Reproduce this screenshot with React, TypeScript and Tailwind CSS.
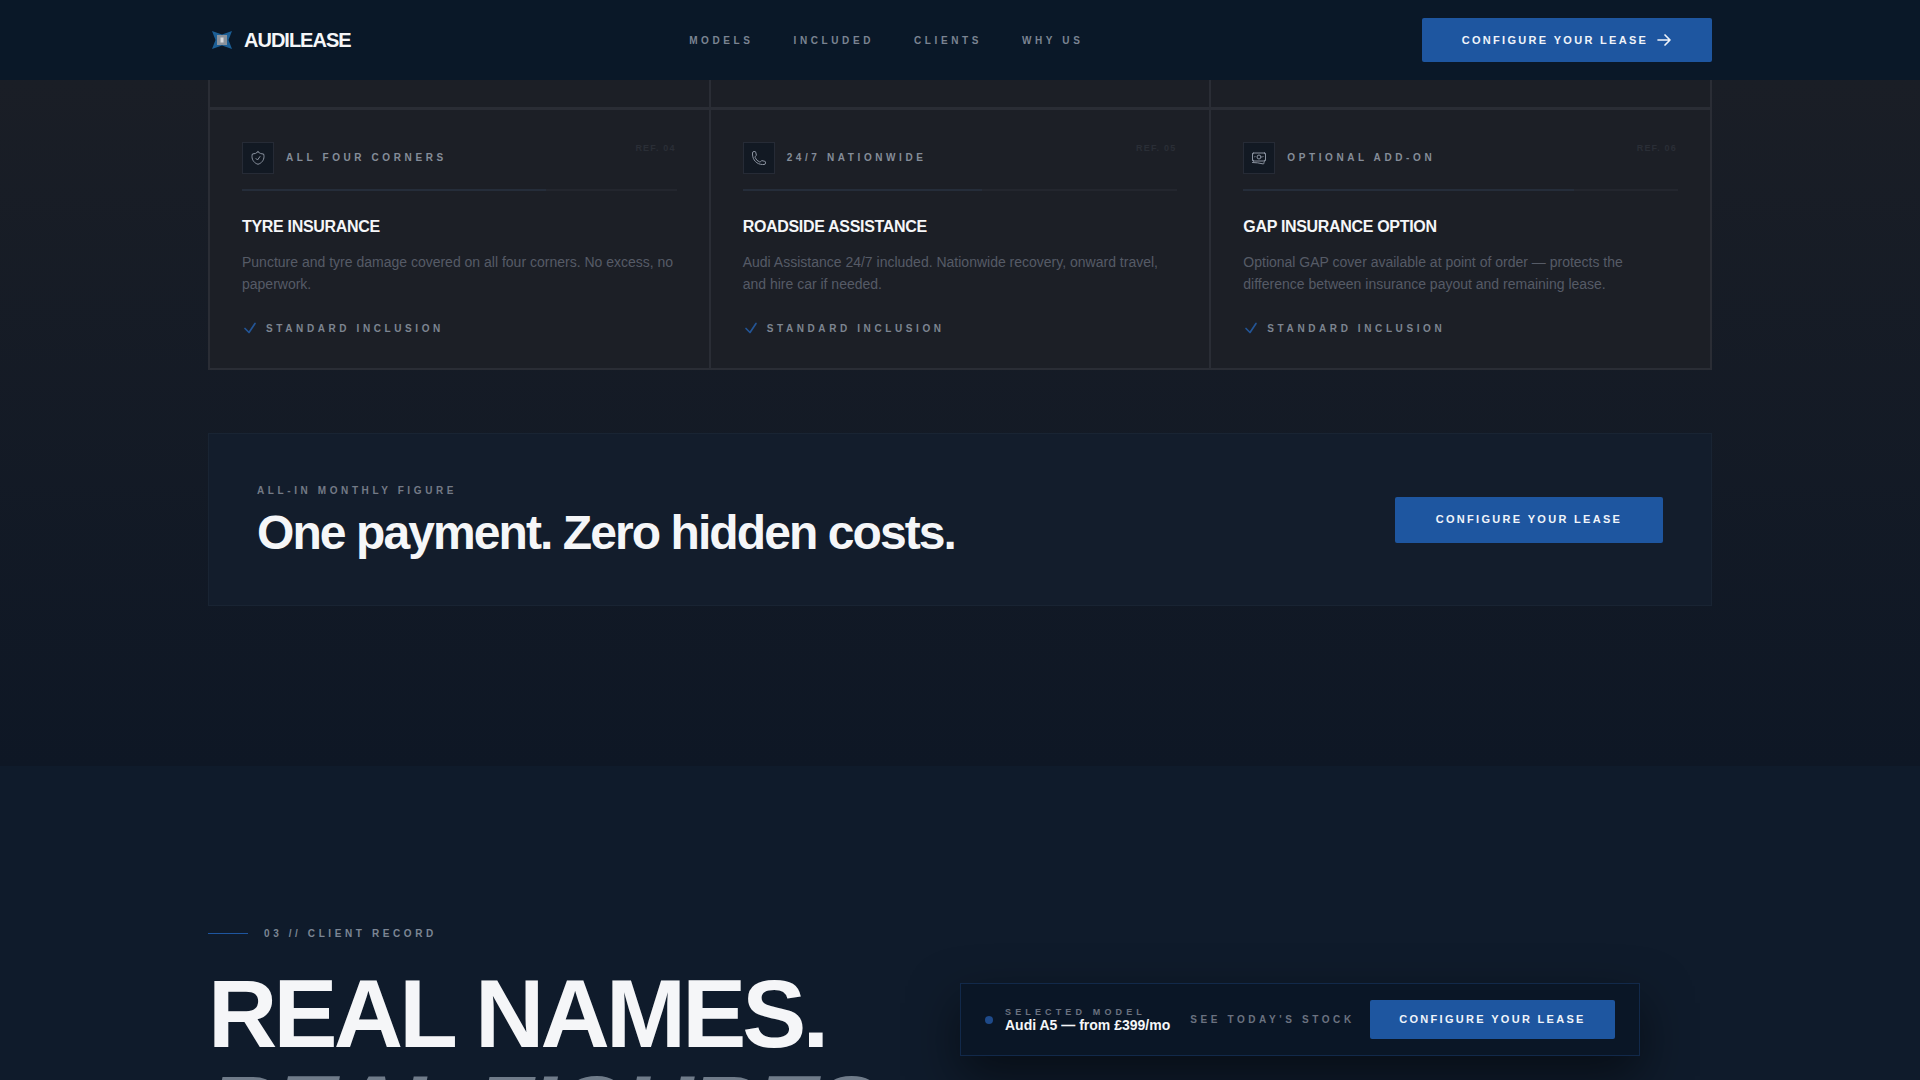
import { HiOutlineArrowRight, HiOutlineBanknotes, HiOutlineCheck, HiOutlinePhone, HiOutlineShieldCheck } from "react-icons/hi2";

const navLinks = ["MODELS", "INCLUDED", "CLIENTS", "WHY US"];

const cards = [
  {
    icon: <HiOutlineShieldCheck className="h-4 w-4" />,
    tag: "ALL FOUR CORNERS",
    ref: "REF. 04",
    title: "TYRE INSURANCE",
    text: "Puncture and tyre damage covered on all four corners. No excess, no paperwork.",
    bar: "w-[70%]",
  },
  {
    icon: <HiOutlinePhone className="h-4 w-4" />,
    tag: "24/7 NATIONWIDE",
    ref: "REF. 05",
    title: "ROADSIDE ASSISTANCE",
    text: "Audi Assistance 24/7 included. Nationwide recovery, onward travel, and hire car if needed.",
    bar: "w-[55%]",
  },
  {
    icon: <HiOutlineBanknotes className="h-4 w-4" />,
    tag: "OPTIONAL ADD-ON",
    ref: "REF. 06",
    title: "GAP INSURANCE OPTION",
    text: "Optional GAP cover available at point of order — protects the difference between insurance payout and remaining lease.",
    bar: "w-[76%]",
  },
];

const Logo = () => (
  <svg viewBox="0 0 20 18" className="h-[18px] w-5">
    <path d="M0 0 L10 3.5 L20 0 L16.5 9 L20 18 L10 14.5 L0 18 L3.5 9 Z" fill="#1c5f96" />
    <rect x="5" y="4" width="10" height="10" fill="#8a929c" />
    <rect x="8.5" y="6.5" width="3" height="5" fill="#d5d9de" />
  </svg>
);

const Card = ({ card }: { card: (typeof cards)[number] }) => (
  <div className="relative border-t border-r-2 border-b-2 border-[#2a2d35] bg-[#1c1f26] px-8 pt-8 pb-8">
    <span className="absolute top-8 right-[33px] text-[9px] font-bold tracking-[0.13em] text-[#2a2e36]">{card.ref}</span>
    <div className="flex items-center gap-3">
      <div className="flex h-8 w-8 items-center justify-center border border-[#262b36] bg-[#121923] text-[#8b93a0]">{card.icon}</div>
      <span className="pb-0.5 text-[10px] font-bold tracking-[0.36em] text-[#858d99]">{card.tag}</span>
    </div>
    <div className="mt-[15px] h-0.5 bg-[#23262e]">
      <div className={`h-full bg-[#252d3a] ${card.bar}`} />
    </div>
    <h3 className="mt-[26px] text-base leading-[20px] font-bold tracking-[-0.02em] text-[#f5f6f8]">{card.title}</h3>
    <p className="mt-[14px] text-sm leading-[22px] text-[#565b66]">{card.text}</p>
    <div className="mt-[25px] flex items-center gap-2">
      <HiOutlineCheck className="h-4 w-4 text-[#235596]" strokeWidth={2.5} />
      <span className="text-[10px] leading-[15px] font-bold tracking-[0.36em] text-[#7d8591]">STANDARD INCLUSION</span>
    </div>
  </div>
);

export default function App() {
  return (
    <div className="relative h-[1080px] overflow-hidden bg-[#0f1b2b] font-['Liberation_Sans',Arial,sans-serif]">
      <header className="h-20 bg-[#0a1828]">
        <div className="mx-auto flex h-full max-w-[1504px] items-center justify-between">
          <div className="flex items-center gap-3 pl-1">
            <Logo />
            <span className="text-xl font-bold tracking-[-0.05em] text-[#f5f6f8]">AUDILEASE</span>
          </div>
          <nav className="flex gap-10">
            {navLinks.map((link) => (
              <a key={link} className="text-[10px] font-bold tracking-[0.36em] text-[#7b8492]">{link}</a>
            ))}
          </nav>
          <a className="flex h-11 w-[290px] items-center justify-center gap-2 rounded-[2px] bg-[#1e56a0] text-[11px] font-bold tracking-[0.21em] text-[#f0f4fa]">
            CONFIGURE YOUR LEASE
            <HiOutlineArrowRight className="h-4 w-4" strokeWidth={2.5} />
          </a>
        </div>
      </header>

      <section className="h-[686px] bg-gradient-to-b from-[#1a1e26] to-[#0e1725]">
        <div className="mx-auto max-w-[1504px]">
          <div className="grid grid-cols-3 border-l-2 border-[#2a2d35]">
            <div className="h-[29px] border-r-2 border-b-2 border-[#2a2d35] bg-[#1c1f26]" />
            <div className="h-[29px] border-r-2 border-b-2 border-[#2a2d35] bg-[#1c1f26]" />
            <div className="h-[29px] border-r-2 border-b-2 border-[#2a2d35] bg-[#1c1f26]" />
            {cards.map((card) => (
              <Card key={card.title} card={card} />
            ))}
          </div>

          <div className="mt-[63px] flex h-[173px] items-center justify-between border border-[#192433] bg-[#131d2c] px-12">
            <div className="pt-1">
              <p className="text-[10px] font-bold tracking-[0.36em] text-[#737a86]">ALL-IN MONTHLY FIGURE</p>
              <h2 className="mt-[7px] text-5xl leading-[56px] font-bold tracking-[-0.04em] text-[#f5f6f8]">One payment. Zero hidden costs.</h2>
            </div>
            <a className="flex h-[46px] w-[268px] items-center justify-center rounded-[2px] bg-[#1e56a0] text-[11px] font-bold tracking-[0.21em] text-[#f0f4fa]">
              CONFIGURE YOUR LEASE
            </a>
          </div>
        </div>
      </section>

      <section className="bg-[#0f1b2b] pt-[160px]">
        <div className="mx-auto max-w-[1504px]">
          <div className="flex items-center gap-4">
            <div className="h-px w-10 bg-[#1e56a0]" />
            <span className="text-[10px] font-bold tracking-[0.36em] text-[#7c8694]">03 // CLIENT RECORD</span>
          </div>
          <h1 className="mt-[25px] text-[96px] leading-[96px] font-bold tracking-[-0.04em] text-[#f5f6f8]">
            REAL NAMES.
            <br />
            <span className="text-[#707c8a] italic">REAL FIGURES</span>
          </h1>
        </div>
      </section>

      <div className="absolute top-[983px] left-[960px] flex h-[73px] w-[680px] items-center border border-[#12294a] bg-[#0a1626] pr-6 pl-6 shadow-[0_20px_50px_rgba(0,0,0,0.5)]">
        <span className="h-2 w-2 rounded-full bg-[#1e4a8a]" />
        <div className="ml-3">
          <p className="text-[9px] leading-[10px] font-bold tracking-[0.46em] text-[#6b7280]">SELECTED MODEL</p>
          <p className="text-sm leading-4 font-bold text-[#f5f6f8]">Audi A5 — from £399/mo</p>
        </div>
        <span className="ml-5 text-[10px] font-bold tracking-[0.36em] text-[#6b7280]">SEE TODAY'S STOCK</span>
        <a className="ml-auto flex h-[39px] w-[245px] items-center justify-center rounded-[2px] bg-[#1e56a0] text-[11px] font-bold tracking-[0.21em] text-[#f0f4fa]">
          CONFIGURE YOUR LEASE
        </a>
      </div>
    </div>
  );
}
